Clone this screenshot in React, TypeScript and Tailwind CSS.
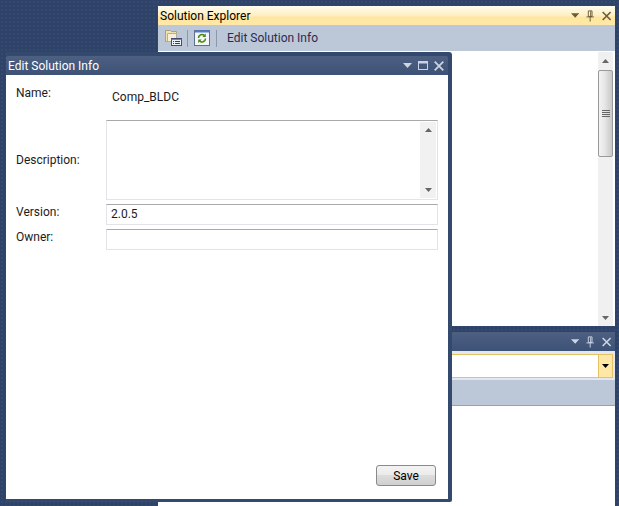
import React from "react";

function Tri({ color }: { color: string }) {
  return (
    <svg width="9" height="5" viewBox="0 0 9 5"><path d="M0 0h9L4.5 5z" fill={color} /></svg>
  );
}
function Pin({ color }: { color: string }) {
  return (
    <svg width="9" height="12" viewBox="0 0 9 12" fill="none">
      <path d="M2.5 .5h4v6h-4z" stroke={color} />
      <path d="M5 1v5.5" stroke={color} />
      <path d="M.5 7h8" stroke={color} />
      <path d="M4.5 7v5" stroke={color} />
    </svg>
  );
}
function Cross({ color, size = 10 }: { color: string; size?: number }) {
  return (
    <svg width={size} height={size} viewBox="0 0 10 10" fill="none">
      <path d="M.7 .7l8.6 8.6M9.3 .7L.7 9.3" stroke={color} strokeWidth="1.7" />
    </svg>
  );
}
function Max() {
  return (
    <svg width="10" height="9" viewBox="0 0 10 9" fill="none">
      <rect x=".5" y=".5" width="9" height="8" stroke="#c9d3e3" />
      <path d="M0 1.5h10" stroke="#c9d3e3" strokeWidth="2" />
    </svg>
  );
}
function ExplorerIcon() {
  return (
    <svg width="17" height="16" viewBox="0 0 17 16" fill="none">
      <path d="M.5 .5h5l1 1h5v10H.5z" fill="#f2e2b0" stroke="#a89f86" />
      <path d="M2.5 3.5h9v8h-9z" fill="#f7efd6" stroke="#b5ad98" />
      <rect x="6.5" y="8.5" width="10" height="7" fill="#eef2f8" stroke="#3d4f74" />
      <path d="M6.5 9.5h10" stroke="#6f86ad" />
      <path d="M8 11.5h1M10 11.5h5M8 13.5h1M10 13.5h5" stroke="#33415f" />
    </svg>
  );
}
function RefreshIcon() {
  return (
    <svg width="16" height="16" viewBox="0 0 16 16" fill="none">
      <rect x=".5" y=".5" width="15" height="15" fill="#f4f6fa" stroke="#5f6f8f" />
      <path d="M1 1.5h14" stroke="#4d7fd0" strokeWidth="2" />
      <path d="M4.5 8a3.5 3.5 0 0 1 6-2.4" stroke="#4b8a10" strokeWidth="1.6" />
      <path d="M11.5 8.5a3.5 3.5 0 0 1-6 2.4" stroke="#4b8a10" strokeWidth="1.6" />
      <path d="M11.8 3.5v3.6H8.3zM4.2 13V9.4h3.5z" fill="#4b8a10" />
    </svg>
  );
}
function ScrollGrip() {
  return (
    <svg width="8" height="8" viewBox="0 0 8 8" fill="none">
      <path d="M0 .5h8M0 2.5h8M0 4.5h8M0 6.5h8" stroke="#666" />
    </svg>
  );
}
function ScrollUp() {
  return <svg width="7" height="4" viewBox="0 0 7 4"><path d="M3.5 0L7 4H0z" fill="#666" /></svg>;
}
function ScrollDown() {
  return <svg width="7" height="4" viewBox="0 0 7 4"><path d="M0 0h7L3.5 4z" fill="#666" /></svg>;
}

export default function App() {
  return (
    <div
      className="relative w-[619px] h-[506px] overflow-hidden bg-[#2e4367] bg-[radial-gradient(#354a70_1px,transparent_1px)] bg-[length:4px_4px] text-[12px] leading-[16px] text-[#1c1c1c]"
      style={{ fontFamily: '"Roboto", "Noto Sans", sans-serif' }}
    >
      <div className="ml-[158px] w-[457px] h-full pt-[6px] flex flex-col gap-[6px]">
        {/* Solution Explorer */}
        <section className="h-[320px] flex flex-col bg-white">
          <div className="h-[19px] flex items-center pl-[2px] pr-[4px] rounded-t-[2px] bg-[linear-gradient(#fffcf0,#ffefc0_50%,#ffe6a0_60%,#ffe8a8)] text-black">
            <span className="flex-1">Solution Explorer</span>
            <span className="flex items-center gap-[7px] w-[40px]">
              <Tri color="#6b5a35" />
              <Pin color="#6b5a35" />
              <Cross color="#6b5a35" />
            </span>
          </div>
          <div className="h-[26px] flex items-center bg-[#bcc7d8] pl-[7px]">
            <ExplorerIcon />
            <span className="w-px h-[17px] bg-[#8c98ab] ml-[5px] mr-[6px]" />
            <RefreshIcon />
            <span className="w-px h-[17px] bg-[#8c98ab] ml-[6px] mr-[10px]" />
            <span className="text-[#2e2a50]">Edit Solution Info</span>
          </div>
          <div className="flex-1 flex justify-end pt-px pr-[2px]">
            <div className="w-[15px] flex flex-col items-center bg-[#f0f0f0] pb-px">
              <div className="h-[18px] flex items-center justify-center"><ScrollUp /></div>
              <div className="w-[15px] h-[87px] rounded-[2px] border border-[#9a9a9a] bg-[linear-gradient(90deg,#f2f2f2,#e8e8e8_40%,#c8c8c8)] flex items-center justify-center">
                <ScrollGrip />
              </div>
              <div className="flex-1" />
              <div className="h-[14px] flex items-center justify-center"><ScrollDown /></div>
            </div>
          </div>
        </section>

        {/* Lower panel */}
        <section className="flex-1 flex flex-col bg-white">
          <div className="h-[19px] shrink-0 flex items-center justify-end pr-[4px] bg-[linear-gradient(#4d6082,#3d5277)]">
            <span className="flex items-center gap-[7px] w-[40px]">
              <Tri color="#cdd5e3" />
              <Pin color="#cdd5e3" />
              <Cross color="#cdd5e3" />
            </span>
          </div>
          <div className="h-[29px] shrink-0 bg-[#e4e7ee] pt-[3px] pb-[2px] pr-[2px]">
            <div className="h-[24px] flex bg-white border border-[#e5c365] justify-end">
              <div className="w-[14px] bg-[#ffe8a6] border-l border-[#e5c365] flex items-center justify-center">
                <svg width="7" height="4" viewBox="0 0 7 4"><path d="M0 0h7L3.5 4z" fill="#000" /></svg>
              </div>
            </div>
          </div>
          <div className="h-[26px] shrink-0 bg-[#bcc7d8] border-b border-[#a0a0a0]" />
          <div className="flex-1 bg-white" />
        </section>
      </div>

      {/* Edit Solution Info floating window */}
      <div className="absolute left-[6px] top-[52px] w-[446px] h-[450px] flex flex-col rounded-tr-[3px] rounded-br-[2px] bg-[#34496e] pt-[4px] pr-[4px] pb-[3px]">
        <div className="h-[19px] shrink-0 flex items-center pl-[2px] pr-[4px] rounded-t-[2px] bg-[linear-gradient(#4d6082,#3d5277)] text-white">
          <span className="flex-1">Edit Solution Info</span>
          <span className="flex items-center gap-[6px]">
            <Tri color="#cdd5e3" />
            <Max />
            <Cross color="#cdd5e3" />
          </span>
        </div>
        <div className="flex-1 flex flex-col bg-white pl-[10px]">
          <div className="grid grid-cols-[90px_332px] grid-rows-[41px_80px_21px_21px] gap-y-[4px]">
            <div className="pt-[10px]">Name:</div>
            <div className="pt-[14px] pl-[6px]">Comp_BLDC</div>

            <div className="self-center">Description:</div>
            <div className="border border-[#e2e4ea] border-t-[#a9a9a9] flex justify-end p-px">
              <div className="w-[16px] h-full bg-[#f1f1f1] flex flex-col items-center justify-between py-[6px]">
                <ScrollUp />
                <ScrollDown />
              </div>
            </div>

            <div>Version:</div>
            <div className="border border-[#e2e4ea] border-t-[#a9a9a9] pl-[4px] leading-[19px]">2.0.5</div>

            <div>Owner:</div>
            <div className="border border-[#e2e4ea] border-t-[#a9a9a9]" />
          </div>
          <div className="mt-auto flex justify-end pr-[12px] pb-[13px]">
            <button className="w-[60px] h-[21px] rounded-[3px] border border-[#8a8a8a] bg-[linear-gradient(#f3f3f3,#ebebeb_45%,#dcdcdc_50%,#cfcfcf)] text-black">
              Save
            </button>
          </div>
        </div>
      </div>
    </div>
  );
}
